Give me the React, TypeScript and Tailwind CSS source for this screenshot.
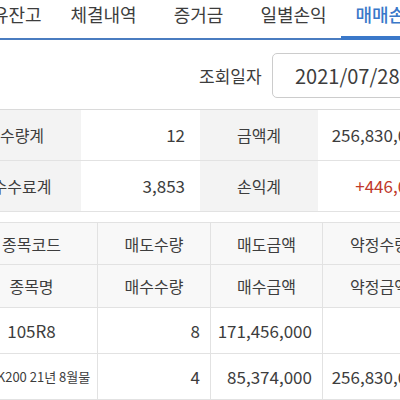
const tabs = ["보유잔고", "체결내역", "증거금", "일별손익", "매매손익"];

const summary = [
  ["수량계", "12", "금액계", "256,830,000", false],
  ["수수료계", "3,853", "손익계", "+446,000", true],
] as const;

const rows = [
  ["105R8", "8", "171,456,000", ""],
  ["미니K200 21년 8월물", "4", "85,374,000", "256,830,000"],
];

export default function App() {
  return (
    <div
      className="w-[400px] h-[400px] overflow-hidden bg-white text-[#3d3d3d]"
      style={{ fontFamily: '"Noto Sans CJK KR", "Noto Sans", sans-serif' }}
    >
      {/* tabs */}
      <div className="border-b-2 border-[#4a7cc0]">
        <div className="flex -ml-[39px]">
          {tabs.map((t, i) => (
            <div
              key={t}
              className={
                "relative w-[95px] h-[38px] shrink-0 pt-[2px] text-center text-[18px] leading-[24px] " +
                (i === 4 ? "text-[#3a78c9] font-medium" : "")
              }
            >
              {t}
              {i === 4 && <span className="absolute left-0 right-0 bottom-[-2px] h-[4px] bg-[#3a78c9]" />}
            </div>
          ))}
        </div>
      </div>

      {/* date */}
      <div className="flex items-center pl-[199px] mt-[13px]">
        <span className="w-[69px] shrink-0 text-[17px] whitespace-nowrap">조회일자</span>
        <div className="ml-[4px] w-[160px] h-[45px] shrink-0 rounded-[5px] border border-[#ccc] flex items-center pl-[22px] text-[20px]">
          2021/07/28
        </div>
      </div>

      {/* summary */}
      <div className="mt-[11px] -ml-[37px] w-[473px] border-t border-[#dadada]">
        {summary.map(([l1, v1, l2, v2, red]) => (
          <div key={l1} className="grid grid-cols-[118px_119px_118px_118px] h-[51px] border-b border-[#e2e2e2] text-[16px]">
            <div className="bg-[#f3f3f3] flex items-center justify-center">{l1}</div>
            <div className="flex items-center justify-end pr-[15px] text-[17px]">{v1}</div>
            <div className="bg-[#f3f3f3] flex items-center justify-center">{l2}</div>
            <div className={"flex items-center justify-end pr-[10px] text-[17px] " + (red ? "text-[#c0392b]" : "")}>{v2}</div>
          </div>
        ))}
      </div>

      {/* detail */}
      <div className="mt-[10px] -ml-[34px] w-[470px] border-t border-[#e2e2e2]">
        {[
          ["종목코드", "매도수량", "매도금액", "약정수량"],
          ["종목명", "매수수량", "매수금액", "약정금액"],
        ].map((r, ri) => (
          <div
            key={ri}
            className={
              "grid grid-cols-[132px_113px_112px_113px] bg-[#f8f8f8] border-b border-[#e2e2e2] text-[16px] " +
              (ri === 0 ? "h-[42px]" : "h-[43px]")
            }
          >
            {r.map((c, ci) => (
              <div key={ci} className={"flex items-center justify-center " + (ci < 3 ? "border-r border-[#e2e2e2]" : "")}>
                {c}
              </div>
            ))}
          </div>
        ))}
        {rows.map((r, ri) => (
          <div key={ri} className="grid grid-cols-[132px_113px_112px_113px] h-[46px] border-b border-[#e2e2e2] text-[17px]">
            <div className={"flex items-center justify-center border-r border-[#e2e2e2] whitespace-nowrap " + (ri === 1 ? "text-[13px]" : "")}>
              {r[0]}
            </div>
            <div className="flex items-center justify-end pr-[10px] border-r border-[#e2e2e2]">{r[1]}</div>
            <div className="flex items-center justify-end pr-[10px] border-r border-[#e2e2e2]">{r[2]}</div>
            <div className="flex items-center justify-end pr-[10px]">{r[3]}</div>
          </div>
        ))}
      </div>
    </div>
  );
}
